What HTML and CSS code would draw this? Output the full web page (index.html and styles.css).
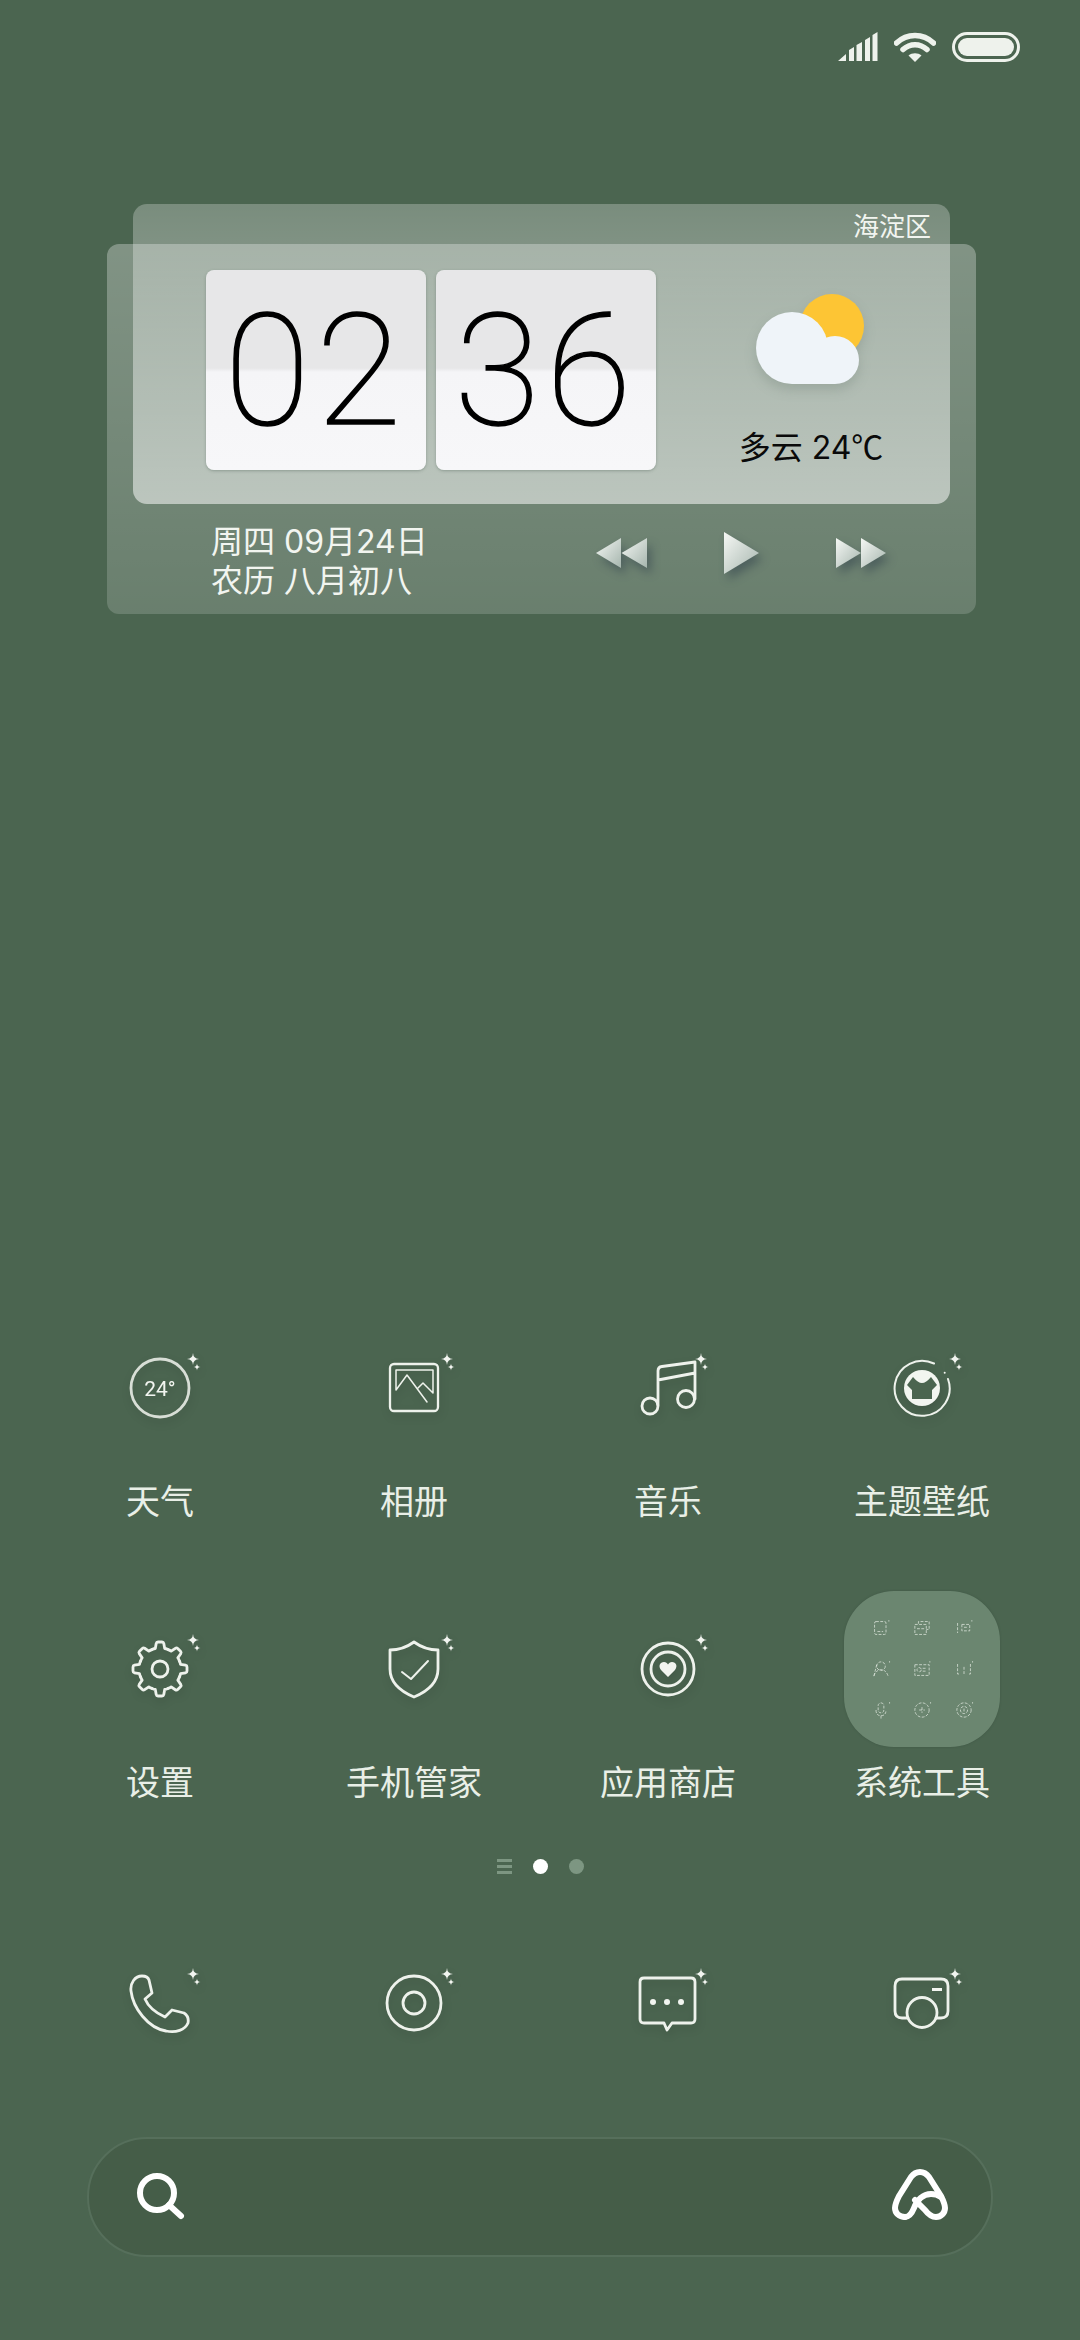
FILE: index.html
```html
<!DOCTYPE html>
<html lang="zh-CN">
<head>
    <meta charset="UTF-8">
    <meta name="viewport" content="width=device-width, initial-scale=1.0">
    <title>桌面</title>
    <link rel="stylesheet" href="styles.css">
</head>
<body>
    <svg class="defs" width="0" height="0">
        <defs>
            <g id="sparks">
                <path d="M83 15 Q83.3 20.7 89 21 Q83.3 21.3 83 27 Q82.7 21.3 77 21 Q82.7 20.7 83 15Z"/>
                <path d="M87 25.5 Q87.2 28.8 90.5 29 Q87.2 29.2 87 32.5 Q86.8 29.2 83.5 29 Q86.8 28.8 87 25.5Z"/>
            </g>
            <path id="gear-tooth" d="M42 30.6 Q44 29.6 45.3 29.5 L46.2 24.5 Q46.5 23 48 23 L52 23 Q53.5 23 53.8 24.5 L54.7 29.5 Q56 29.6 58 30.6"/>
            <linearGradient id="tri-fill" x1="0" y1="0" x2="1" y2="1">
                <stop offset="0" stop-color="#f6f8f5"/>
                <stop offset="1" stop-color="#a5b5ad"/>
            </linearGradient>
        </defs>
    </svg>

    <div class="status-bar">
        <svg class="status-signal" width="40" height="30" viewBox="0 0 40 30">
            <path d="M0 29 L8 22 V29Z M11 29 V18 L16 15 V29Z M18.5 29 V13 L24 10 V29Z M27 29 V8 L32 5 V29Z M34.5 29 V3 L39.5 0 V29Z"/>
        </svg>
        <svg class="status-wifi" width="42" height="30" viewBox="0 0 42 30">
            <path d="M2.5 11 C13 1 29 1 39.5 11 M9 17.5 C16 11 26 11 33 17.5"/>
            <path class="wifi-dot" d="M21 30 L14.5 23.5 C18 20.5 24 20.5 27.5 23.5Z"/>
        </svg>
        <div class="status-battery"><div class="status-battery-level"></div></div>
    </div>

    <div class="widget">
        <div class="widget-back">
            <div class="widget-footer">
                <div class="widget-date">
                    <div>周四 09月24日</div>
                    <div>农历 八月初八</div>
                </div>
                <div class="media-controls">
                    <svg width="51" height="40" viewBox="0 0 51 40"><path d="M0 20 L25 5 V35Z"/><path d="M25.5 20 L51 5 V35Z"/></svg>
                    <svg width="35" height="44" viewBox="0 0 35 44"><path d="M0 1 L35 22 L0 43Z"/></svg>
                    <svg width="50" height="40" viewBox="0 0 50 40"><path d="M0 5 L25 20 L0 35Z"/><path d="M25 5 L50 20 L25 35Z"/></svg>
                </div>
            </div>
        </div>
        <div class="widget-panel">
            <div class="widget-location">海淀区</div>
            <div class="widget-main">
                <div class="flip-card">02</div>
                <div class="flip-card">36</div>
                <div class="weather">
                    <svg class="weather-icon" width="120" height="120" viewBox="0 0 120 120">
                        <circle cx="81" cy="56" r="32" fill="#fdc534"/>
                        <g fill="#eff4f9">
                            <circle cx="41" cy="78" r="36"/>
                            <circle cx="84" cy="90" r="24"/>
                            <rect x="41" y="90" width="43" height="24"/>
                        </g>
                    </svg>
                    <div class="weather-text">多云 24<span class="weather-unit">℃</span></div>
                </div>
            </div>
        </div>
    </div>

    <div class="app-grid">
        <div class="app">
            <svg class="icon" width="100" height="100" viewBox="0 0 100 100">
                <circle class="soft" cx="50" cy="50" r="29"/>
                <text class="icon-temp" x="50" y="58">24°</text>
                <use href="#sparks" class="spark"/>
            </svg>
            <div class="app-name">天气</div>
        </div>
        <div class="app">
            <svg class="icon" width="100" height="100" viewBox="0 0 100 100">
                <rect class="slim" x="26" y="26" width="48" height="47" rx="4"/>
                <path class="thin" d="M32 52 V32 H69 V55 L59 45 L54 50 M32 52 L43 37 L63 64"/>
                <use href="#sparks" class="spark"/>
            </svg>
            <div class="app-name">相册</div>
        </div>
        <div class="app">
            <svg class="icon" width="100" height="100" viewBox="0 0 100 100">
                <circle cx="32" cy="68" r="8"/>
                <circle cx="68" cy="61" r="8.5"/>
                <path d="M40 67 V33 Q40 29 44 28.5 L77 24 V61 M40 42 L77 35"/>
                <use href="#sparks" class="spark"/>
            </svg>
            <div class="app-name">音乐</div>
        </div>
        <div class="app">
            <svg class="icon" width="100" height="100" viewBox="0 0 100 100">
                <path class="medium" d="M62 25.5 A27.5 27.5 0 1 0 76 41"/>
                <circle class="filled" cx="72.7" cy="34.7" r="1"/>
                <circle class="filled" cx="50" cy="50" r="18"/>
                <path class="shirt" d="M41 39 Q46 45 50 45 Q54 45 59 39 L65 47 L60 52 V61 H40 V52 L35 47Z"/>
                <use href="#sparks" class="spark"/>
            </svg>
            <div class="app-name">主题壁纸</div>
        </div>

        <div class="app">
            <svg class="icon" width="100" height="100" viewBox="0 0 100 100">
                <circle cx="50" cy="50" r="8"/>
                <use href="#gear-tooth"/>
                <use href="#gear-tooth" transform="rotate(45 50 50)"/>
                <use href="#gear-tooth" transform="rotate(90 50 50)"/>
                <use href="#gear-tooth" transform="rotate(135 50 50)"/>
                <use href="#gear-tooth" transform="rotate(180 50 50)"/>
                <use href="#gear-tooth" transform="rotate(225 50 50)"/>
                <use href="#gear-tooth" transform="rotate(270 50 50)"/>
                <use href="#gear-tooth" transform="rotate(315 50 50)"/>
                <use href="#sparks" class="spark"/>
            </svg>
            <div class="app-name">设置</div>
        </div>
        <div class="app">
            <svg class="icon" width="100" height="100" viewBox="0 0 100 100">
                <path d="M50 23 Q61 31 74 31 V50 Q74 68 50 78 Q26 68 26 50 V31 Q39 31 50 23Z"/>
                <path class="medium" d="M38 53 L47 60 L64 42"/>
                <use href="#sparks" class="spark"/>
            </svg>
            <div class="app-name">手机管家</div>
        </div>
        <div class="app">
            <svg class="icon" width="100" height="100" viewBox="0 0 100 100">
                <circle cx="50" cy="50" r="26"/>
                <circle cx="50" cy="50" r="17"/>
                <path class="filled" d="M50 58 L43 51 C40 47 42 43 46 43 C48 43 49 44 50 45.5 C51 44 52 43 54 43 C58 43 60 47 57 51Z"/>
                <use href="#sparks" class="spark"/>
            </svg>
            <div class="app-name">应用商店</div>
        </div>
        <div class="app">
            <div class="icon-slot">
                <div class="folder">
                    <svg class="mini" viewBox="0 0 28 28"><rect x="5" y="5" width="16" height="18" rx="2"/><path d="M9 19 H17 M25 3 V5"/></svg>
                    <svg class="mini" viewBox="0 0 28 28"><path d="M9 8 V5 H24 V16 H20"/><rect x="4" y="9" width="16" height="14"/><path d="M7 15 H17"/></svg>
                    <svg class="mini" viewBox="0 0 28 28"><path d="M5 7 V21 M25 3 V5"/><rect x="11" y="9" width="11" height="9"/><path d="M14 13 H18"/></svg>
                    <svg class="mini" viewBox="0 0 28 28"><circle cx="14" cy="10" r="6"/><path d="M4 24 Q7 15 14 15 Q21 15 24 24 M8 8 L4 24 M26 3 V5"/></svg>
                    <svg class="mini" viewBox="0 0 28 28"><rect x="4" y="8" width="20" height="15"/><circle cx="10" cy="15" r="3"/><path d="M15 13 H21 M15 17 H21 M25 3 V5"/></svg>
                    <svg class="mini" viewBox="0 0 28 28"><path d="M5 7 V21 H8 M23 7 V21 H19 M14 11 V21 M26 3 V5"/></svg>
                    <svg class="mini" viewBox="0 0 28 28"><rect x="10" y="4" width="8" height="14" rx="4"/><path d="M7 14 Q7 22 14 22 Q21 22 21 14 M14 22 V26 M26 3 V5"/></svg>
                    <svg class="mini" viewBox="0 0 28 28"><circle cx="14" cy="14" r="10"/><path d="M10 14 H18 M14 10 V18 M26 3 V5"/></svg>
                    <svg class="mini" viewBox="0 0 28 28"><circle cx="14" cy="14" r="10"/><circle cx="14" cy="14" r="5"/><path d="M14 12 V16 M26 3 V5"/></svg>
                </div>
            </div>
            <div class="app-name">系统工具</div>
        </div>
    </div>

    <div class="pager">
        <div class="pager-lines"><span></span><span></span><span></span></div>
        <div class="pager-dot pager-dot-on"></div>
        <div class="pager-dot"></div>
    </div>

    <div class="dock">
        <svg class="icon" width="100" height="100" viewBox="0 0 100 100">
            <path d="M32 23 C25 23 20 30 21 38 C23 55 38 75 56 78 C66 80 75 77 78 70 C79 65 77 62 74 60 L62 57 L55 64 C46 60 38 53 35 46 L42 40 L39 27 C38 24 35 23 32 23Z"/>
            <use href="#sparks" class="spark"/>
        </svg>
        <svg class="icon" width="100" height="100" viewBox="0 0 100 100">
            <circle cx="50" cy="50" r="27"/>
            <circle cx="50" cy="50" r="11"/>
            <use href="#sparks" class="spark"/>
        </svg>
        <svg class="icon" width="100" height="100" viewBox="0 0 100 100">
            <path d="M26 25 H73 Q77 25 77 29 V66 Q77 70 73 70 H54 L49 77 L46 70 H26 Q22 70 22 66 V29 Q22 25 26 25Z"/>
            <circle class="filled" cx="35" cy="49" r="3"/>
            <circle class="filled" cx="49" cy="49" r="3"/>
            <circle class="filled" cx="63" cy="49" r="3"/>
            <use href="#sparks" class="spark"/>
        </svg>
        <svg class="icon" width="100" height="100" viewBox="0 0 100 100">
            <path d="M36 65 H30 Q23 65 23 58 V33 Q23 26 30 26 H69 Q76 26 76 33 V58 Q76 65 69 65 H64"/>
            <circle cx="50" cy="59.5" r="15"/>
            <rect class="filled" x="60" y="35" width="10" height="3"/>
            <use href="#sparks" class="spark"/>
        </svg>
    </div>

    <div class="search-bar">
        <svg class="search-icon" width="60" height="60" viewBox="0 0 60 60">
            <circle cx="24" cy="26" r="17"/>
            <path d="M36 38 L48 49"/>
        </svg>
        <svg class="search-icon" width="60" height="60" viewBox="0 0 60 60">
            <path d="M15 50 C9 50 5 46 5 41 C5 37 7 33 9 29 L21 10 C24 6 27 5 30 5 C33 5 36 6 39 10 L51 29 C53 33 55 37 55 41 C55 46 51 50 46 50 C41 50 38 47 35 43 L25 33"/>
            <path d="M15 50 C19 50 22 46 24 41 C27 33 33 27 41 27 C45 27 48 28 51 30"/>
        </svg>
    </div>
</body>
</html>
```

FILE: styles.css
```css
/* Home screen */
body {
    margin: 0;
    width: 1080px;
    height: 2340px;
    overflow: hidden;
    background-color: #4b6550;
    color: #eef2ec;
    font-family: "Noto Sans CJK SC", "Noto Sans", sans-serif;
}

.defs {
    display: block;
}

/* Status bar */
.status-bar {
    display: flex;
    justify-content: flex-end;
    align-items: center;
    height: 30px;
    padding: 32px 60px 0 0;
}

.status-signal {
    fill: #eef2ec;
    margin-right: 16px;
}

.status-wifi {
    fill: none;
    stroke: #eef2ec;
    stroke-width: 5.5;
    stroke-linecap: round;
    margin-right: 16px;
}

.status-wifi .wifi-dot {
    fill: #eef2ec;
    stroke: none;
}

.status-battery {
    box-sizing: border-box;
    width: 68px;
    height: 30px;
    padding: 3px;
    border: 3px solid #eef2ec;
    border-radius: 15px;
}

.status-battery-level {
    height: 100%;
    border-radius: 9px;
    background-color: #eef2ec;
}

/* Clock and weather widget */
.widget {
    display: grid;
    width: 869px;
    height: 410px;
    margin: 142px 0 0 107px;
}

.widget-back,
.widget-panel {
    grid-area: 1 / 1;
}

.widget-back {
    display: flex;
    flex-direction: column;
    justify-content: flex-end;
    margin-top: 40px;
    border-radius: 12px;
    background: linear-gradient(180deg, rgba(255, 255, 255, 0.3), rgba(255, 255, 255, 0.17));
}

.widget-footer {
    display: flex;
    justify-content: space-between;
    align-items: center;
    box-sizing: border-box;
    height: 110px;
    padding: 0 90px 0 104px;
}

.widget-date {
    padding-top: 3px;
    font-family: Inter, "Noto Sans CJK SC", sans-serif;
    font-size: 32px;
    line-height: 39px;
    color: #f2f5f0;
}

.media-controls {
    display: flex;
    align-items: center;
    gap: 77px;
    margin-bottom: 12px;
    fill: url(#tri-fill);
}

.media-controls svg {
    filter: drop-shadow(4px 6px 5px rgba(40, 55, 70, 0.45));
}

.widget-panel {
    display: flex;
    flex-direction: column;
    height: 300px;
    margin: 0 26px;
    border-radius: 14px;
    background: linear-gradient(180deg, rgba(255, 255, 255, 0.26), rgba(255, 255, 255, 0.53));
}

.widget-location {
    height: 42px;
    padding-right: 19px;
    font-size: 26px;
    line-height: 42px;
    text-align: right;
    color: #f2f5f0;
}

.widget-main {
    display: flex;
    gap: 10px;
    margin-top: 24px;
    padding-left: 73px;
}

.flip-card {
    width: 220px;
    height: 200px;
    border-radius: 8px;
    background: linear-gradient(180deg, #e7e7e8 0, #e7e7e8 49%, #f5f5f7 51%, #f7f7f9 100%);
    box-shadow: 0 1px 3px rgba(60, 80, 70, 0.35);
    font-family: Roboto, sans-serif;
    font-size: 156px;
    font-weight: 100;
    line-height: 202px;
    letter-spacing: 6px;
    text-align: center;
    color: #000;
    -webkit-text-stroke: 1.5px #000;
}

.weather {
    display: flex;
    flex-direction: column;
    align-items: center;
    width: 240px;
    margin-left: 25px;
}

.weather-icon {
    filter: drop-shadow(0 6px 6px rgba(70, 90, 80, 0.2));
}

.weather-text {
    margin-top: 35px;
    font-family: Inter, "Noto Sans CJK SC", sans-serif;
    font-size: 32px;
    line-height: 40px;
    color: #0a0a0a;
    white-space: nowrap;
}

.weather-unit {
    font-family: "Noto Sans CJK SC", sans-serif;
}

/* App icons */
.app-grid,
.dock {
    display: grid;
    grid-template-columns: repeat(4, 254px);
    justify-items: center;
    padding-left: 33px;
}

.app-grid {
    row-gap: 99px;
    margin-top: 724px;
}

.app {
    display: flex;
    flex-direction: column;
    align-items: center;
}

.app-name {
    margin-top: 42px;
    font-size: 34px;
    line-height: 40px;
    color: #e9efe7;
    white-space: nowrap;
}

.icon {
    display: block;
    overflow: visible;
    fill: none;
    stroke: #eef2ec;
    stroke-width: 2.8;
    stroke-linecap: round;
    stroke-linejoin: round;
    filter: drop-shadow(1px 4px 4px rgba(0, 0, 0, 0.14));
}

.icon .spark,
.icon .filled {
    fill: #f2f5f0;
    stroke: none;
}

.icon .soft {
    stroke: #d8ded6;
}

.icon .slim {
    stroke-width: 2.3;
}

.icon .thin {
    stroke-width: 1.5;
}

.icon .medium {
    stroke-width: 2;
}

.icon .shirt {
    fill: #4b6550;
    stroke: none;
}

.icon-temp {
    fill: #f2f5f0;
    stroke: none;
    font-family: Roboto, sans-serif;
    font-size: 21px;
    text-anchor: middle;
}

/* Folder with the small icons */
.icon-slot {
    display: flex;
    justify-content: center;
    align-items: center;
    height: 100px;
}

.folder {
    display: grid;
    flex: none;
    grid-template-columns: repeat(3, 41.5px);
    grid-auto-rows: 41px;
    justify-items: center;
    align-items: center;
    align-content: center;
    justify-content: center;
    width: 156px;
    height: 156px;
    border-radius: 50px;
    background-color: #6b8670;
    box-shadow: 0 0 2px rgba(50, 70, 55, 0.5);
}

.mini {
    width: 20px;
    height: 20px;
    fill: none;
    stroke: #e6ece4;
    stroke-width: 1;
    stroke-dasharray: 4 2;
}

/* Page indicator */
.pager {
    display: flex;
    justify-content: center;
    align-items: center;
    gap: 21px;
    height: 16px;
    margin-top: 57px;
}

.pager-lines {
    display: flex;
    flex-direction: column;
    gap: 3px;
    width: 15px;
}

.pager-lines span {
    height: 3px;
    background-color: #7d9682;
}

.pager-dot {
    width: 15px;
    height: 15px;
    border-radius: 50%;
    background-color: #7d9682;
}

.pager-dot-on {
    background-color: #fff;
}

/* Dock and search */
.dock {
    margin-top: 79px;
}

.search-bar {
    display: flex;
    justify-content: space-between;
    align-items: center;
    box-sizing: border-box;
    width: 906px;
    height: 120px;
    margin: 84px 0 0 87px;
    padding: 0 41px 0 44px;
    border: 2px solid #566f5b;
    border-radius: 60px;
    background-color: #455d48;
}

.search-icon {
    fill: none;
    stroke: #fff;
    stroke-width: 6;
    stroke-linecap: round;
    stroke-linejoin: round;
}
```
